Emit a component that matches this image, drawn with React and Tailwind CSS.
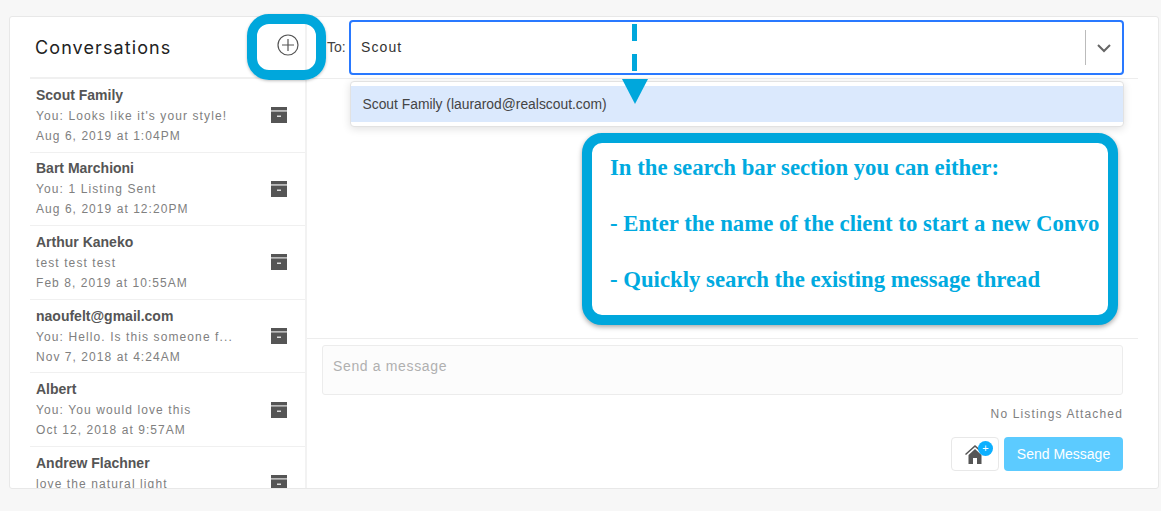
import React from "react";

const rows = [
  ["Scout Family", "You: Looks like it's your style!", "Aug 6, 2019 at 1:04PM"],
  ["Bart Marchioni", "You: 1 Listing Sent", "Aug 6, 2019 at 12:20PM"],
  ["Arthur Kaneko", "test test test", "Feb 8, 2019 at 10:55AM"],
  ["naoufelt@gmail.com", "You: Hello. Is this someone f...", "Nov 7, 2018 at 4:24AM"],
  ["Albert", "You: You would love this", "Oct 12, 2018 at 9:57AM"],
  ["Andrew Flachner", "love the natural light", ""],
];

function Archive() {
  return (
    <svg width="16" height="16" viewBox="0 0 16 16" className="shrink-0">
      <rect x="0" y="0" width="16" height="3.4" fill="#555" />
      <path d="M0 4.4h16V16H0z" fill="#555" />
      <rect x="6" y="8.6" width="4" height="1.2" fill="#fff" />
    </svg>
  );
}

export default function App() {
  return (
    <div className="relative h-[511px] w-[1161px] overflow-hidden bg-[#f7f7f7] px-[9px] pt-[16px] font-['Liberation_Sans',sans-serif]">
      <div className="flex h-[473px] w-[1150px] overflow-hidden rounded-[3px] border border-[#e8e8e8] bg-white">
        <aside className="flex h-full w-[297px] shrink-0 flex-col border-r-2 border-[#f2f2f2] pl-[20px]">
          <div className="flex h-[62px] shrink-0 items-center justify-between border-b-2 border-[#f0f0f0] pr-[6px]">
            <h1 className="pl-[5px] pt-[1px] font-['Inter',sans-serif] text-[18px] font-normal tracking-[1.1px] text-[#222]">
              Conversations
            </h1>
            <svg width="22" height="22" viewBox="0 0 22 22" className="mb-[5px]" fill="none" stroke="#555" strokeWidth="1.2">
              <circle cx="11" cy="11" r="10" />
              <path d="M11 5v12M5 11h12" />
            </svg>
          </div>
          {rows.map((r) => (
            <div key={r[0]} className="flex h-[73.6px] shrink-0 items-center justify-between border-b border-[#f0f0f0] pl-[6px] pr-[18px]">
              <div className="w-[200px]">
                <div className="text-[14px] font-bold leading-[20px] text-[#555]">{r[0]}</div>
                <div className="mt-[1px] whitespace-nowrap text-[12px] leading-[20px] tracking-[1.1px] text-[#808080]">{r[1]}</div>
                <div className="h-[20px] whitespace-nowrap text-[12px] leading-[20px] tracking-[1.05px] text-[#808080]">{r[2]}</div>
              </div>
              <Archive />
            </div>
          ))}
        </aside>
        <main className="flex h-full min-w-0 flex-1 flex-col pr-[20px]">
          <div className="flex h-[62px] shrink-0 items-center border-b border-[#ededed] pl-[20px]">
            <span className="w-[22px] text-[14px] text-[#444]">To:</span>
            <div className="flex h-[55px] w-[775px] items-center rounded-[4px] border-2 border-[#2979ff] pl-[10px]">
              <span className="flex-1 text-[14px] tracking-[1.1px] text-[#333]">Scout</span>
              <span className="h-[35px] w-px bg-[#bbb]" />
              <svg width="36" height="20" viewBox="0 0 36 20" fill="none" stroke="#666" strokeWidth="2">
                <path d="M12 7l6 6 6-6" />
              </svg>
            </div>
          </div>
          <div className="flex-1" />
          <div className="h-[150px] shrink-0 border-t border-[#ededed] px-[15px] pt-[6px]">
            <div className="h-[50px] rounded-[3px] border border-[#ececec] bg-[#fcfcfc] pl-[10px] pt-[10px] text-[14px] leading-[20px] tracking-[0.65px] text-[#b0b0b0]">
              Send a message
            </div>
            <div className="pt-[11px] text-right text-[12px] leading-[16px] tracking-[1.15px] text-[#808080]">No Listings Attached</div>
            <div className="flex justify-end gap-[5px] pt-[15px]">
              <div className="relative flex h-[34px] w-[48px] items-center justify-center rounded-[4px] border border-[#e8e8e8]">
                <svg width="20" height="19" viewBox="0 0 20 19" className="mt-[1px]" fill="#555">
                  <path d="M10 0L0 9l1 1 9-8 9 8 1-1-4-3.6V1h-2v2.6z" />
                  <path d="M3.5 10l6.5-6 6.500 6v9H12v-6H8v6H3.500z" />
                </svg>
                <span className="absolute left-[26px] top-[3px] flex h-[15px] w-[15px] items-center justify-center rounded-full bg-[#0db0ff] text-[11px] leading-none text-white">+</span>
              </div>
              <div className="flex h-[34px] w-[119px] items-center justify-center rounded-[4px] bg-[#5ccbff] text-[14px] text-white">Send Message</div>
            </div>
          </div>
        </main>
      </div>

      {/* open dropdown */}
      <div className="absolute left-[350px] top-[81px] h-[46px] w-[774px] rounded-[4px] border border-[#e2e2e2] bg-white py-[4px] shadow-[0_2px_8px_rgba(0,0,0,0.12)]">
        <div className="flex h-[36px] items-center bg-[#dbe9fd] pl-[11.5px] text-[13.85px] text-[#444]">Scout Family (laurarod@realscout.com)</div>
      </div>

      {/* annotations */}
      <div className="absolute left-[247px] top-[14px] h-[66px] w-[79px] rounded-[22px] border-[10px] border-[#00a7dc] shadow-[0_1px_3px_rgba(0,0,0,0.25)]" />
      <div className="absolute left-[632px] top-[24px] h-[17px] w-[5px] bg-[#00a7dc]" />
      <div className="absolute left-[632px] top-[54px] h-[17px] w-[5px] bg-[#00a7dc]" />
      <svg width="26" height="26" viewBox="0 0 26 26" className="absolute left-[622px] top-[79px]">
        <path d="M0 0h26L13 25z" fill="#00a7dc" />
      </svg>
      <div className="absolute left-[582px] top-[133px] h-[192px] w-[536px] rounded-[20px] border-[10px] border-[#00a7dc] bg-white pl-[18px] pt-[11px] font-['Liberation_Serif',serif] text-[22.75px] font-bold leading-[28px] text-[#00aae0] shadow-[0_2px_5px_rgba(0,0,0,0.35)]">
        <div className="whitespace-nowrap">In the search bar section you can either:</div>
        <div className="mt-[28px] whitespace-nowrap">- Enter the name of the client to start a new Convo</div>
        <div className="mt-[28px] whitespace-nowrap">- Quickly search the existing message thread</div>
      </div>
    </div>
  );
}
